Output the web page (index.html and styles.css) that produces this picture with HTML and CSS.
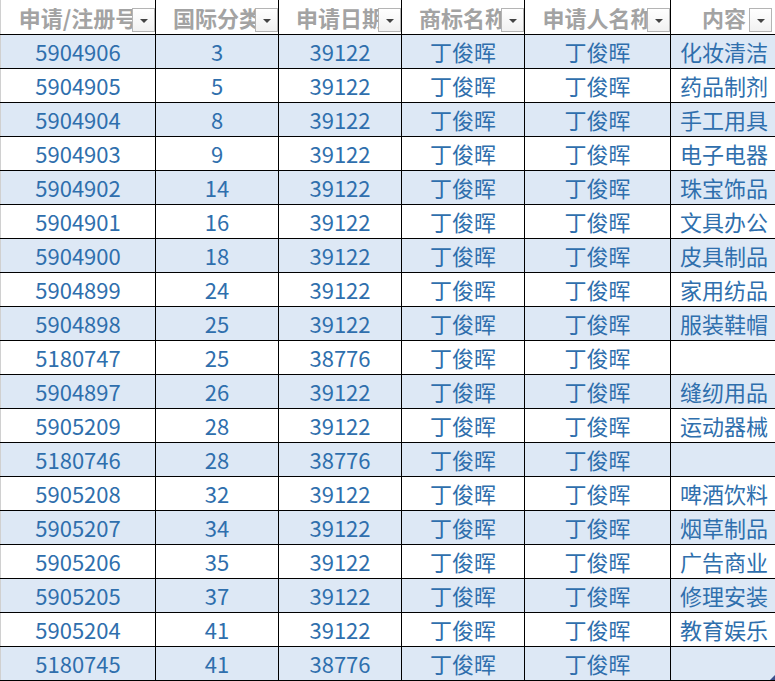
FILE: index.html
```html
<!DOCTYPE html>
<html lang="zh">
<head>
<meta charset="utf-8">
<link rel="stylesheet" href="styles.css">
</head>
<body>
<div class="sheet">
  <div class="grid">
    <div class="hd first">申请/注册号<span class="btn"></span></div>
    <div class="hd">国际分类<span class="btn"></span></div>
    <div class="hd">申请日期<span class="btn"></span></div>
    <div class="hd">商标名称<span class="btn"></span></div>
    <div class="hd">申请人名称<span class="btn"></span></div>
    <div class="hd">内容<span class="btn last"></span></div>

    <div class="c first b">5904906</div><div class="c b">3</div><div class="c b">39122</div><div class="c b">丁俊晖</div><div class="c b">丁俊晖</div><div class="c b">化妆清洁</div>
    <div class="c first">5904905</div><div class="c">5</div><div class="c">39122</div><div class="c">丁俊晖</div><div class="c">丁俊晖</div><div class="c">药品制剂</div>
    <div class="c first b">5904904</div><div class="c b">8</div><div class="c b">39122</div><div class="c b">丁俊晖</div><div class="c b">丁俊晖</div><div class="c b">手工用具</div>
    <div class="c first">5904903</div><div class="c">9</div><div class="c">39122</div><div class="c">丁俊晖</div><div class="c">丁俊晖</div><div class="c">电子电器</div>
    <div class="c first b">5904902</div><div class="c b">14</div><div class="c b">39122</div><div class="c b">丁俊晖</div><div class="c b">丁俊晖</div><div class="c b">珠宝饰品</div>
    <div class="c first">5904901</div><div class="c">16</div><div class="c">39122</div><div class="c">丁俊晖</div><div class="c">丁俊晖</div><div class="c">文具办公</div>
    <div class="c first b">5904900</div><div class="c b">18</div><div class="c b">39122</div><div class="c b">丁俊晖</div><div class="c b">丁俊晖</div><div class="c b">皮具制品</div>
    <div class="c first">5904899</div><div class="c">24</div><div class="c">39122</div><div class="c">丁俊晖</div><div class="c">丁俊晖</div><div class="c">家用纺品</div>
    <div class="c first b">5904898</div><div class="c b">25</div><div class="c b">39122</div><div class="c b">丁俊晖</div><div class="c b">丁俊晖</div><div class="c b">服装鞋帽</div>
    <div class="c first">5180747</div><div class="c">25</div><div class="c">38776</div><div class="c">丁俊晖</div><div class="c">丁俊晖</div><div class="c"></div>
    <div class="c first b">5904897</div><div class="c b">26</div><div class="c b">39122</div><div class="c b">丁俊晖</div><div class="c b">丁俊晖</div><div class="c b">缝纫用品</div>
    <div class="c first">5905209</div><div class="c">28</div><div class="c">39122</div><div class="c">丁俊晖</div><div class="c">丁俊晖</div><div class="c">运动器械</div>
    <div class="c first b">5180746</div><div class="c b">28</div><div class="c b">38776</div><div class="c b">丁俊晖</div><div class="c b">丁俊晖</div><div class="c b"></div>
    <div class="c first">5905208</div><div class="c">32</div><div class="c">39122</div><div class="c">丁俊晖</div><div class="c">丁俊晖</div><div class="c">啤酒饮料</div>
    <div class="c first b">5905207</div><div class="c b">34</div><div class="c b">39122</div><div class="c b">丁俊晖</div><div class="c b">丁俊晖</div><div class="c b">烟草制品</div>
    <div class="c first">5905206</div><div class="c">35</div><div class="c">39122</div><div class="c">丁俊晖</div><div class="c">丁俊晖</div><div class="c">广告商业</div>
    <div class="c first b">5905205</div><div class="c b">37</div><div class="c b">39122</div><div class="c b">丁俊晖</div><div class="c b">丁俊晖</div><div class="c b">修理安装</div>
    <div class="c first">5905204</div><div class="c">41</div><div class="c">39122</div><div class="c">丁俊晖</div><div class="c">丁俊晖</div><div class="c">教育娱乐</div>
    <div class="c first b">5180745</div><div class="c b">41</div><div class="c b">38776</div><div class="c b">丁俊晖</div><div class="c b">丁俊晖</div><div class="c b corner"></div>
  </div>
</div>
</body>
</html>
```

FILE: styles.css
```css
html, body {
  margin: 0;
  padding: 0;
  background: #ffffff;
  overflow: hidden;
}
.sheet {
  width: 775px;
  height: 681px;
  overflow: hidden;
}
.grid {
  display: grid;
  width: 777px;
  grid-template-columns: 155px 122px 122px 122px 145px 106px;
  grid-auto-rows: 33px;
  grid-template-rows: 34px;
  column-gap: 1px;
  row-gap: 1px;
  background: #000000;
  border-bottom: 1px solid #000000;
  font-family: "Noto Sans CJK SC", "Noto Sans", sans-serif;
  font-size: 22px;
}
.hd {
  position: relative;
  background: #ffffff;
  color: #a3a3a3;
  font-weight: 700;
  text-align: center;
  white-space: nowrap;
  overflow: hidden;
  line-height: 34px;
  letter-spacing: 0;
}
.c {
  background: #ffffff;
  color: #2f6fad;
  text-align: center;
  white-space: nowrap;
  overflow: hidden;
  line-height: 33px;
}
.c.b {
  background: #dde8f5;
}
.first {
  border-left: 1px solid #d0d0d0;
}
.btn {
  position: absolute;
  right: 0;
  top: 8px;
  width: 21px;
  height: 22px;
  border: 1px solid #b4b4b4;
  background: linear-gradient(#ffffff, #f1f1f1);
}
.btn.last {
  right: 5px;
}
.btn::after {
  content: "";
  position: absolute;
  left: 7px;
  top: 10px;
  border-left: 4px solid transparent;
  border-right: 4px solid transparent;
  border-top: 4px solid #444444;
}
.corner {
  position: relative;
}
.corner::after {
  content: "";
  position: absolute;
  right: 2px;
  bottom: 0;
  border-left: 5px solid transparent;
  border-bottom: 5px solid #3b4f8c;
}
```
